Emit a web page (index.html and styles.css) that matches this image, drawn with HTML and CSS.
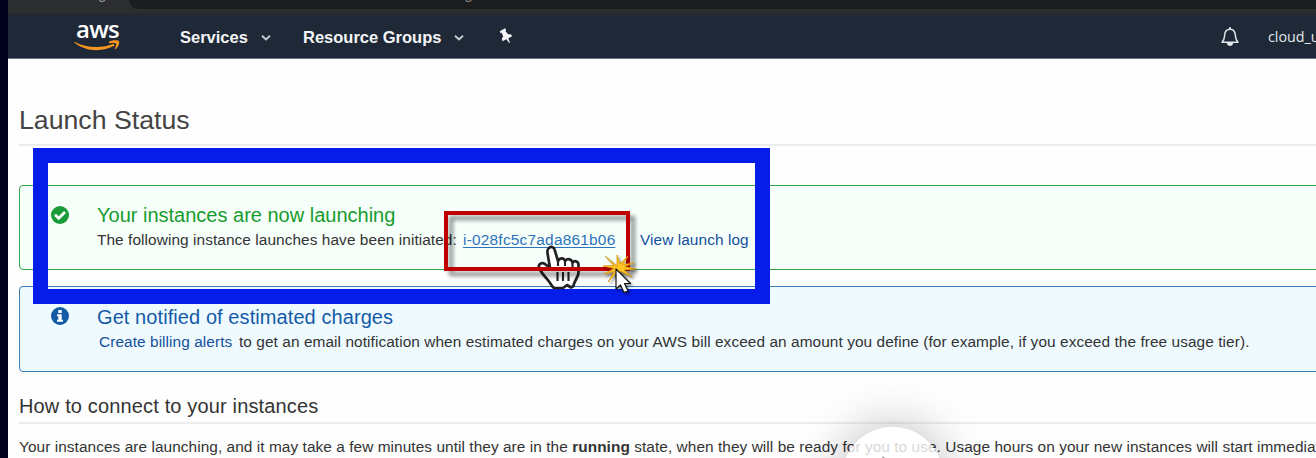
FILE: index.html
```html
<!DOCTYPE html>
<html lang="en">
<head>
<meta charset="utf-8">
<title>Launch Status</title>
<link rel="stylesheet" href="styles.css">
</head>
<body>
<div class="screen">
  <div class="edge"></div>
  <div class="window">
    <div class="browser"><span class="browser-label">g</span><div class="address"><span class="url">console.aws.amazon.com/ec2/v2/home?region=us-east-1</span></div></div>
    <nav class="nav">
      <div class="logo">
        <span class="logo-text">aws</span>
        <svg class="smile" width="46" height="12" viewBox="0 0 46 12"><path d="M.5 1.700C13 8.300 27 8.700 39.500 3.800L40.700 5.600C28 12.500 12 11.800.5 2.800Z" fill="#f7951f"/><path d="M35 1.500C39 .1 43-.2 45 .8C45.900 3.500 43.800 7.500 41.300 9.300L40.700 8.800C41.800 6.500 42.600 4.300 42 3.500C41 2.700 38 3 35 3.200Z" fill="#f7951f"/></svg>
      </div>
      <span class="nav-item services">Services</span>
      <svg class="chev" width="10" height="6" viewBox="0 0 10 6"><path d="M1 .8L5 4.400 9 .8" fill="none" stroke="#c7ccd2" stroke-width="1.900"/></svg>
      <span class="nav-item groups">Resource Groups</span>
      <svg class="chev" width="10" height="6" viewBox="0 0 10 6"><path d="M1 .8L5 4.400 9 .8" fill="none" stroke="#c7ccd2" stroke-width="1.900"/></svg>
      <svg class="pin" width="14" height="16" viewBox="0 0 14 16"><path d="M.8 3.200L6 .3 7.200 1.900 6.500 3.100 9 6.200 11.800 6.300 13.200 8.300 9.300 10.200 11 14.700 10.300 15 7.300 11.200 3.500 13.200 2.800 10.800 4.200 8.200 2.500 4.800 1 4.800Z" fill="#f3f5f7"/></svg>
      <svg class="bell" width="18" height="20" viewBox="0 0 18 20"><path d="M1 15.300C3.500 13 3.300 11.500 3.700 7.800C4 4.300 6 2.200 9 2.200S14 4.300 14.300 7.800C14.700 11.500 14.500 13 17 15.300Z" fill="none" stroke="#dfe3e8" stroke-width="1.500" stroke-linejoin="round"/><path d="M9 .3V2.500" stroke="#dfe3e8" stroke-width="2"/><path d="M5.800 16H12.200C11.800 20 6.200 20 5.800 16Z" fill="#e4e8ec"/></svg>
      <span class="user">cloud_user</span>
    </nav>
    <main class="page">
      <h1 class="title">Launch Status</h1>
      <section class="alert success">
        <svg class="alert-icon" width="18" height="18" viewBox="0 0 18 18"><circle cx="9" cy="9" r="9" fill="#189b38"/><path d="M4 8.700L7.700 12.300 14 6" fill="none" stroke="#fff" stroke-width="2.700"/></svg>
        <div class="alert-body">
          <h2 class="alert-title t-success">Your instances are now launching</h2>
          <p class="alert-line"><span class="initiated">The following instance launches have been initiated:</span><a class="instance">i-028fc5c7ada861b06</a><a class="log">View launch log</a></p>
        </div>
      </section>
      <section class="alert info">
        <svg class="alert-icon" width="18" height="18" viewBox="0 0 18 18"><circle cx="9" cy="9" r="9" fill="#145ba7"/><path d="M7.300 3H10.700V6H7.300ZM6 7.300H10.700V12.700H12V14.700H6V12.700H7.300V9.200H6Z" fill="#fff"/></svg>
        <div class="alert-body">
          <h2 class="alert-title t-info">Get notified of estimated charges</h2>
          <p class="alert-line"><a class="billing">Create billing alerts</a><span class="billing-text">to get an email notification when estimated charges on your AWS bill exceed an amount you define (for example, if you exceed the free usage tier).</span></p>
        </div>
      </section>
      <h2 class="subtitle">How to connect to your instances</h2>
      <p class="paragraph">Your instances are launching, and it may take a few minutes until they are in the <b>running</b> state, when they will be ready for you to use. Usage hours on your new instances will start immediately</p>
    </main>
  </div>
  <div class="frame-blue"></div>
  <svg class="hand" width="46" height="52" viewBox="0 0 46 52"><path d="M12 4C15 1.500 17.500 4 18 7L21 17C23 13.500 27 13.500 28 17C31 14 34.500 15 35.500 18.500C38 16 41.500 17.500 41.500 21V29C41 34 37 37 36.500 42L34 43.500 30 41 26 44H17L15 42C11.500 35 4 30 2 23.500C1 20 5 18 8 20L13 24 10.500 9C10.200 7 10.500 5 12 4Z" fill="#fff" stroke="#222" stroke-width="2.700" stroke-linejoin="round"/><path d="M21 17V22M28 17V22M35.500 19V23M20.500 28V37M26 28V37M31.500 28V37" fill="none" stroke="#222" stroke-width="2.100"/></svg>
  <div class="frame-red"></div>
  <svg class="burst" width="50" height="48" viewBox="0 0 50 48"><path d="M15 12L3 2 12 11.500 1 12 12 14.500 2 20 12.500 17.500 6 28 15 18 18 24 18 17 30 23 22 16 34 15 22.500 12.500 32 9 21 10.500 26 2 18 10 15 1Z" fill="#ffc423" stroke="#d99508" stroke-width=".8"/><path d="M14 15V35L18.500 31 22 38.500 26 37 22.500 29.500H28.500Z" fill="#fff" stroke="#111" stroke-width="1.200" stroke-linejoin="round"/></svg>
  <div class="bubble"></div>
  <svg class="bubble-mark" width="5" height="3" viewBox="0 0 5 3"><path d="M0 0L5 3H1Z" fill="#999"/></svg>
</div>
</body>
</html>
```
FILE: styles.css
```css
* { box-sizing: border-box; }
body { margin: 0; overflow: hidden; font-family: "Liberation Sans", Arial, sans-serif; color: #333; }
h1, h2, p { margin: 0; font-weight: 400; white-space: nowrap; }
.screen { position: relative; display: flex; width: 1316px; height: 458px; overflow: hidden; background: #fefefe; }
.edge { flex: none; width: 8px; background: #02001c; }
.window { flex: none; width: 1308px; }
.browser { display: flex; height: 15px; background: #2c2d31; border-bottom: 2px solid #27282b; overflow: hidden; line-height: 17px; }
.browser-label { flex: none; width: 121px; padding-left: 90px; margin-top: -14px; font: 15px/17px Roboto, sans-serif; color: #999; }
.address { width: 1200px; height: 9px; border-radius: 0 0 0 13px; background: #1b1c1e; overflow: hidden; }
.url { display: block; margin: -14px 0 0 44px; font: 15px/17px Roboto, sans-serif; color: #888; white-space: nowrap; }
.nav { display: flex; align-items: center; height: 44px; padding-left: 66px; background: #1f2836; border-bottom: 1px solid #68727e; white-space: nowrap; overflow: hidden; }
.nav > * { flex: none; }
.logo { display: flex; flex-direction: column; width: 46px; height: 32px; margin-right: 60px; }
.logo-text { height: 19px; padding-left: 2px; font: 600 24px/15px "Open Sans", sans-serif; letter-spacing: -.7px; color: #fff; }
.smile { flex: none; }
.nav-item { padding-top: 2px; font-weight: 700; font-size: 16.500px; color: #f3f5f7; }
.services { width: 81px; }
.groups { width: 151px; margin-left: 32px; }
.chev { margin-top: 2px; }
.pin { margin-left: 35px; margin-top: -1px; }
.bell { margin-left: 708px; }
.user { margin-left: 29px; font: 14.300px "Open Sans", sans-serif; color: #e4e8ec; }
.page { padding-left: 11px; }
.title { height: 87px; padding-top: 46px; border-bottom: 2px solid #ececec; font-size: 26.700px; line-height: 31px; color: #444; }
.alert { display: flex; width: 1320px; height: 85px; padding: 20px 0 0 31px; border: 1px solid; border-radius: 4px; }
.success { margin-top: 39px; background: #f7fffb; border-color: #35a54b; }
.info { height: 86px; margin-top: 16px; margin-bottom: -1px; background: #effaff; border-color: #397bb5; }
.alert-icon { flex: none; }
.alert-body { padding-left: 28px; margin-top: -1px; }
.info .alert-body { margin-top: 0; }
.alert-title { font-size: 20px; line-height: 20px; }
.t-success { color: #189b2d; }
.t-info { color: #145ba7; letter-spacing: .08px; }
.alert-line { display: flex; font-size: 15.400px; line-height: 18px; margin-top: 6px; letter-spacing: .075px; }
.initiated { width: 366px; }
.instance { width: 177px; color: #2c73bb; letter-spacing: .23px; text-decoration: underline; text-underline-offset: 2px; }
.log, .billing { color: #15509b; }
.billing { width: 142px; padding-left: 2px; }
.subtitle { height: 53px; padding-top: 24px; border-bottom: 2px solid #ececec; font-size: 20px; line-height: 23px; letter-spacing: .15px; }
.paragraph { padding-top: 14px; font-size: 15.400px; line-height: 18px; letter-spacing: .065px; }
.frame-blue { position: absolute; left: 33px; top: 148px; width: 737px; height: 156px; border: 15px solid #061de9; }
.frame-red { position: absolute; left: 444px; top: 211px; width: 186px; height: 60px; border: 4px solid #be0000; filter: drop-shadow(5px 5px 2px rgba(0,0,0,.45)); }
.hand { position: absolute; left: 537px; top: 244px; }
.burst { position: absolute; left: 602px; top: 254px; filter: drop-shadow(2px 2px 1px rgba(0,0,0,.4)); }
.bubble { position: absolute; left: 842px; top: 427px; width: 101px; height: 101px; border-radius: 50%; background: rgba(255,255,255,.8); box-shadow: 0 0 50px rgba(0,0,0,.28); }
.bubble-mark { position: absolute; left: 882px; top: 456px; }
```
